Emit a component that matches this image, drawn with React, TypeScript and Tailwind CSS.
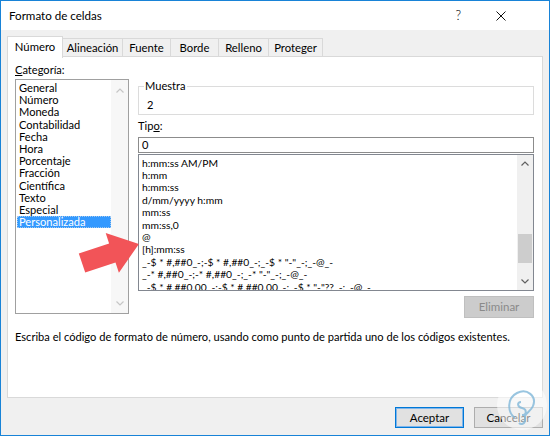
import React from "react";

const categories = [
  "General",
  "Número",
  "Moneda",
  "Contabilidad",
  "Fecha",
  "Hora",
  "Porcentaje",
  "Fracción",
  "Científica",
  "Texto",
  "Especial",
  "Personalizada",
];

const formats = [
  "h:mm:ss AM/PM",
  "h:mm",
  "h:mm:ss",
  "d/mm/yyyy h:mm",
  "mm:ss",
  "mm:ss,0",
  "@",
  "[h]:mm:ss",
  '_-$ * #,##0_-;-$ * #,##0_-;_-$ * "-"_-;_-@_-',
  '_-* #,##0_-;-* #,##0_-;_-* "-"_-;_-@_-',
  '_-$ * #,##0,00_-;-$ * #,##0,00_-;_-$ * "-"??_-;_-@_-',
];

const tabs = [
  { label: "Número", w: "w-[56px]" },
  { label: "Alineación", w: "w-[60px]" },
  { label: "Fuente", w: "w-[48px]" },
  { label: "Borde", w: "w-[48px]" },
  { label: "Relleno", w: "w-[50px]" },
  { label: "Proteger", w: "w-[54px]" },
];

function Chevron({ up, color }: { up?: boolean; color: string }) {
  return (
    <svg width="8" height="5" viewBox="0 0 8 5" className="block">
      <polyline
        points={up ? "0.5,4.5 4,1 7.5,4.5" : "0.5,0.5 4,4 7.5,0.5"}
        fill="none"
        stroke={color}
        strokeWidth="1.2"
      />
    </svg>
  );
}

function Tab({ label, w, selected }: { label: string; w: string; selected?: boolean }) {
  if (selected) {
    return (
      <div
        className={`${w} relative z-10 -mb-px flex h-[22px] items-center justify-center border border-b-0 border-[#d9d9d9] bg-white text-[11.3px]`}
      >
        {label}
      </div>
    );
  }
  return (
    <div
      className={`${w} flex h-[19px] items-center justify-center border border-b-0 border-l-0 border-[#d9d9d9] bg-[#f0f0f0] text-[11.3px]`}
    >
      {label}
    </div>
  );
}

export default function App() {
  return (
    <div className="relative flex h-[436px] w-[550px] flex-col overflow-hidden border border-[#1883d7] bg-[#f0f0f0] font-['Lato','Noto_Sans',sans-serif] text-[11.1px] text-black">
      {/* title bar */}
      <div className="flex h-[29px] shrink-0 items-center bg-white pl-[8px]">
        <span className="text-[11.6px]">Formato de celdas</span>
        <span className="ml-auto mr-[35px] text-[13px] font-light leading-none">?</span>
        <svg width="10" height="10" viewBox="0 0 10 10" className="mr-[43px]">
          <path d="M0.5 0.5 L9.5 9.5 M9.5 0.5 L0.5 9.5" stroke="#111" strokeWidth="1" />
        </svg>
      </div>

      {/* tabs */}
      <div className="-mb-px mt-[5px] flex h-[22px] items-end px-[6px]">
        {tabs.map((t, i) => (
          <Tab key={t.label} label={t.label} w={t.w} selected={i === 0} />
        ))}
      </div>

      {/* panel */}
      <div className="mx-[6px] flex h-[342px] flex-col border border-[#d9d9d9] bg-white">
        <div className="flex">
          {/* left column */}
          <div className="w-[121px] shrink-0 pl-[7px] pt-[6px]">
            <div className="leading-[14px]">
              <span className="underline">C</span>ategoría:
            </div>
            <div className="mt-[2px] flex h-[235px] w-[114px] border border-[#a0a0a0]">
              <div className="flex-1 pl-px pt-[2px]">
                {categories.map((c) => (
                  <div
                    key={c}
                    className={
                      c === "Personalizada"
                        ? "bg-[#3399ff] px-[2px] leading-[12.2px] text-white outline-1 -outline-offset-1 outline-dotted outline-[#a0c8f0]"
                        : "px-[2px] leading-[12.2px]"
                    }
                  >
                    {c}
                  </div>
                ))}
              </div>
              <div className="flex w-[17px] flex-col items-center justify-between bg-[#f7f7f7] pb-[7px] pt-[8px]">
                <Chevron up color="#c6c6c6" />
                <Chevron color="#c6c6c6" />
              </div>
            </div>
          </div>

          {/* right column */}
          <div className="ml-[9px] flex w-[396px] shrink-0 flex-col pt-[22px]">
            <fieldset className="m-0 h-[36px] border border-[#dcdcdc] p-0">
              <legend className="ml-[5px] px-[1px] leading-[14px]">Muestra</legend>
              <div className="pl-[8px] pt-[5px] leading-[14px]">2</div>
            </fieldset>
            <div className="mt-[4px] leading-[14px]">
              Tip<span className="underline">o</span>:
            </div>
            <div className="mt-[4px] h-[16px] border border-[#8c8c8c] px-[3px] leading-[14px]">0</div>
            <div className="mt-px flex h-[137px] border border-[#828790]">
              <div className="flex-1 overflow-hidden whitespace-nowrap pl-[3px] pt-[1.5px] text-[10.3px]">
                {formats.map((f) => (
                  <div key={f} className="leading-[12.4px]">
                    {f}
                  </div>
                ))}
              </div>
              <div className="flex w-[16px] flex-col bg-[#f0f0f0]">
                <div className="flex h-[17px] items-center justify-center">
                  <Chevron up color="#606060" />
                </div>
                <div className="flex-1">
                  <div className="mx-px mt-[62px] h-[29px] bg-[#cdcdcd]" />
                </div>
                <div className="flex h-[17px] items-center justify-center">
                  <Chevron color="#606060" />
                </div>
              </div>
            </div>
            <div className="mt-[5px] flex h-[22px] w-[70px] items-center justify-center self-end border border-[#bfbfbf] bg-[#cccccc] text-[11.5px] text-[#8a8a8a]">
              Eliminar
            </div>
          </div>
        </div>
        <div className="mt-[12px] whitespace-nowrap pl-[7px] leading-[14px]">
          Escriba el código de formato de número, usando como punto de partida uno de los códigos existentes.
        </div>
      </div>

      {/* footer */}
      <div className="flex justify-end gap-[10px] pr-[6px] pt-[9px]">
        <div className="flex h-[21px] w-[69px] items-center justify-center border border-[#0078d7] bg-[#e1e1e1] text-[11.5px] shadow-[inset_0_0_0_1px_#7fb5ea]">
          Aceptar
        </div>
        <div className="flex h-[21px] w-[69px] items-center justify-center border border-[#adadad] bg-[#e1e1e1] text-[11.5px]">
          Cancelar
        </div>
      </div>

      {/* red pointer arrow */}
      <svg className="pointer-events-none absolute left-0 top-0" width="550" height="436">
        <polygon
          points="77.8,252.5 108.1,242.4 104.7,232 137.9,243 117.9,271.8 114.5,261.4 84.2,271.5"
          fill="#f25458"
        />
      </svg>

      {/* watermark */}
      <svg className="pointer-events-none absolute left-[494px] top-[377px]" width="54" height="54" viewBox="0 0 54 54">
        <circle cx="27" cy="27" r="25" fill="#ffffff" fillOpacity="0.55" />
        <path
          d="M20 40 C12 34 12 20 22 15 C32 10 42 18 38 28 C36 33 32 34 30 38 L30 42 C30 46 26 47 24 45 M26 24 C22 24 22 29 27 30 C32 31 32 37 27 37"
          fill="none"
          stroke="#7fb6d8"
          strokeOpacity="0.8"
          strokeWidth="2"
        />
      </svg>
    </div>
  );
}
